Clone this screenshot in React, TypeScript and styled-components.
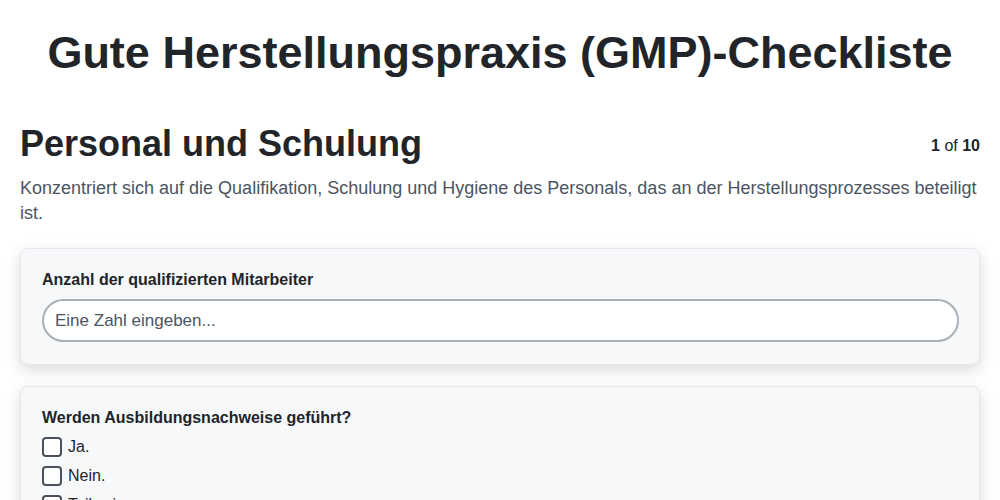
import styled, { createGlobalStyle } from 'styled-components';

const GlobalStyle = createGlobalStyle`
  * {
    box-sizing: border-box;
  }
  body {
    margin: 0;
    background: #ffffff;
    font-family: 'Liberation Sans', Arial, sans-serif;
    color: #212529;
  }
`;

const Page = styled.div`
  padding: 20px;
`;

const Title = styled.h1`
  margin: 7px 0 44px;
  font-size: 45px;
  font-weight: 700;
  text-align: center;
  color: #212529;
`;

const SectionHeader = styled.div`
  display: flex;
  align-items: center;
  justify-content: space-between;
`;

const SectionTitle = styled.h2`
  margin: 0;
  font-size: 36px;
  font-weight: 700;
  color: #212529;
`;

const Progress = styled.div`
  padding-top: 3px;
  font-size: 16px;
  color: #212529;

  b {
    font-weight: 700;
  }
`;

const Description = styled.p`
  margin: 11px 0 22px;
  font-size: 18px;
  line-height: 25px;
  color: #4b5563;
`;

const Card = styled.div`
  background: #f7f8fa;
  border: 1px solid #e5e7eb;
  border-radius: 8px;
  padding: 22px 20px 22px 21px;
  margin-bottom: 21px;
  box-shadow: 0 5px 15px rgba(0, 0, 0, 0.15);
`;

const Question = styled.label`
  display: block;
  font-size: 16px;
  font-weight: 700;
  color: #212529;
  margin-bottom: ${({ $gap }: { $gap: number }) => $gap}px;
`;

const NumberInput = styled.input`
  display: block;
  width: 100%;
  height: 43px;
  padding: 0 11px;
  font-family: inherit;
  font-size: 17px;
  color: #212529;
  background: #ffffff;
  border: 2px solid #aab0b8;
  border-radius: 999px;
  outline: none;

  &::placeholder {
    color: #4b5563;
  }
`;

const Options = styled.div`
  display: flex;
  flex-direction: column;
  gap: 5px;
`;

const Option = styled.label`
  display: flex;
  align-items: center;
  gap: 6px;
  height: 24px;
  font-size: 16px;
  color: #212529;
`;

const Box = styled.span`
  width: 20px;
  height: 20px;
  border: 2px solid #4b5060;
  border-radius: 4px;
  background: #ffffff;
  flex-shrink: 0;
`;

const options = ['Ja.', 'Nein.', 'Teilweise.'];

export default function App() {
  return (
    <>
      <GlobalStyle />
      <Page>
        <Title>Gute Herstellungspraxis (GMP)-Checkliste</Title>
        <SectionHeader>
          <SectionTitle>Personal und Schulung</SectionTitle>
          <Progress>
            <b>1</b> of <b>10</b>
          </Progress>
        </SectionHeader>
        <Description>
          Konzentriert sich auf die Qualifikation, Schulung und Hygiene des Personals, das an der
          Herstellungsprozesses beteiligt ist.
        </Description>
        <Card>
          <Question $gap={10}>Anzahl der qualifizierten Mitarbeiter</Question>
          <NumberInput type="text" placeholder="Eine Zahl eingeben..." />
        </Card>
        <Card>
          <Question $gap={8}>Werden Ausbildungsnachweise geführt?</Question>
          <Options>
            {options.map((o) => (
              <Option key={o}>
                <Box />
                {o}
              </Option>
            ))}
          </Options>
        </Card>
      </Page>
    </>
  );
}
